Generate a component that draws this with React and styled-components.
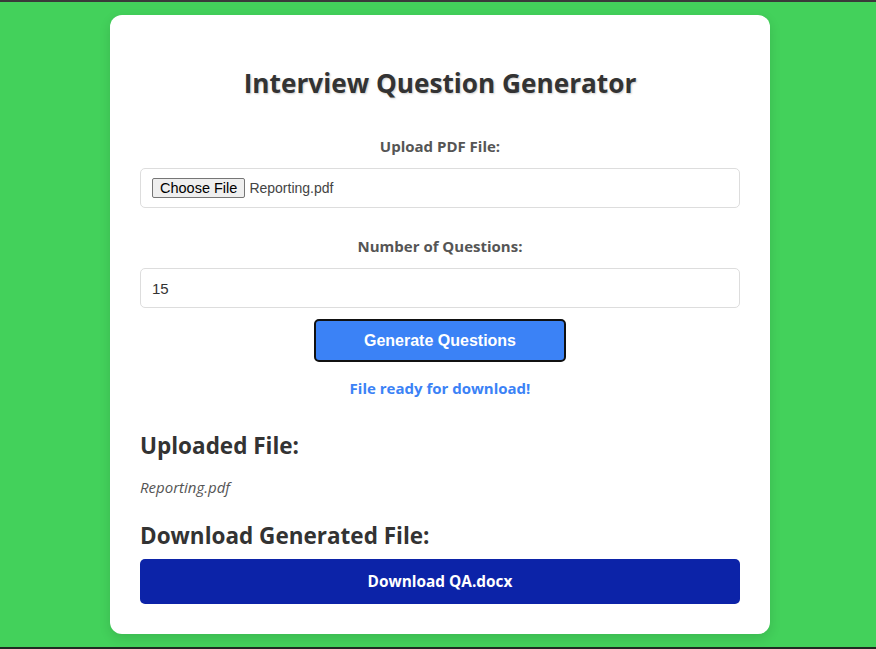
import styled, { createGlobalStyle } from "styled-components";

const GlobalStyle = createGlobalStyle`
  html, body {
    margin: 0;
    padding: 0;
  }
  body {
    background: #43d15b;
    font-family: "Open Sans", "Noto Sans", sans-serif;
    border-top: 2px solid #3a3a3a;
    border-bottom: 2px solid #1f2a22;
    min-height: 649px;
    box-sizing: border-box;
    overflow: hidden;
  }
`;

const Page = styled.div`
  display: flex;
  justify-content: center;
  padding: 13px 0 0 4px;
`;

const Card = styled.div`
  width: 660px;
  box-sizing: border-box;
  background: #fff;
  border-radius: 12px;
  padding: 30px 30px 30px;
  box-shadow: 0 4px 12px rgba(0, 0, 0, 0.12);
`;

const Title = styled.h1`
  margin: 20px 0 35px;
  text-align: center;
  font-size: 26.2px;
  font-weight: 700;
  color: #333;
  text-shadow: 1px 1px 2px rgba(0, 0, 0, 0.2);
`;

const Field = styled.div`
  display: flex;
  flex-direction: column;
  margin-bottom: ${(p) => p.gap || 0}px;
`;

const Label = styled.label`
  text-align: center;
  font-size: 15px;
  font-weight: 700;
  color: #555;
  margin-bottom: 12px;
`;

const Box = styled.div`
  height: 40px;
  box-sizing: border-box;
  border: 1px solid #ddd;
  border-radius: 5px;
  padding: 0 11px;
  display: flex;
  align-items: center;
  font-family: "Liberation Sans", Arial, sans-serif;
  font-size: 15px;
  color: #333;
`;

const ChooseButton = styled.span`
  font-family: "Liberation Sans", Arial, sans-serif;
  font-size: 14.5px;
  color: #000;
  background: #efefef;
  border: 1px solid #767676;
  border-radius: 2px;
  padding: 1px 7px;
  line-height: 16px;
  margin-right: 4px;
`;

const FileName = styled.span`
  font-size: 14px;
  color: #444;
`;

const Generate = styled.button`
  display: block;
  margin: 11px auto 0;
  width: 252px;
  height: 43px;
  background: #3b82f6;
  color: #fff;
  border: 2px solid #111;
  border-radius: 5px;
  font-family: "Liberation Sans", Arial, sans-serif;
  font-weight: 700;
  font-size: 16px;
`;

const Status = styled.p`
  margin: 16px 0 0;
  text-align: center;
  color: #3b82f6;
  font-weight: 700;
  font-size: 15px;
`;

const SubHeading = styled.h3`
  margin: ${(p) => p.top}px 0 0;
  font-size: 22.5px;
  font-weight: 700;
  color: #333;
  line-height: 30px;
`;

const Uploaded = styled.p`
  margin: 16px 0 0;
  font-style: italic;
  font-size: 15px;
  color: #555;
`;

const Download = styled.a`
  display: flex;
  align-items: center;
  justify-content: center;
  margin-top: 8px;
  height: 45px;
  background: #0c23a8;
  color: #fff;
  border-radius: 5px;
  font-weight: 700;
  font-size: 15.4px;
  text-decoration: none;
`;

export default function App() {
  return (
    <>
      <GlobalStyle />
      <Page>
        <Card>
          <Title>Interview Question Generator</Title>
          <Field gap={28}>
            <Label>Upload PDF File:</Label>
            <Box>
              <ChooseButton>Choose File</ChooseButton>
              <FileName>Reporting.pdf</FileName>
            </Box>
          </Field>
          <Field>
            <Label>Number of Questions:</Label>
            <Box>15</Box>
          </Field>
          <Generate>Generate Questions</Generate>
          <Status>File ready for download!</Status>
          <SubHeading top={33}>Uploaded File:</SubHeading>
          <Uploaded>Reporting.pdf</Uploaded>
          <SubHeading top={24}>Download Generated File:</SubHeading>
          <Download href="#">Download QA.docx</Download>
        </Card>
      </Page>
    </>
  );
}
